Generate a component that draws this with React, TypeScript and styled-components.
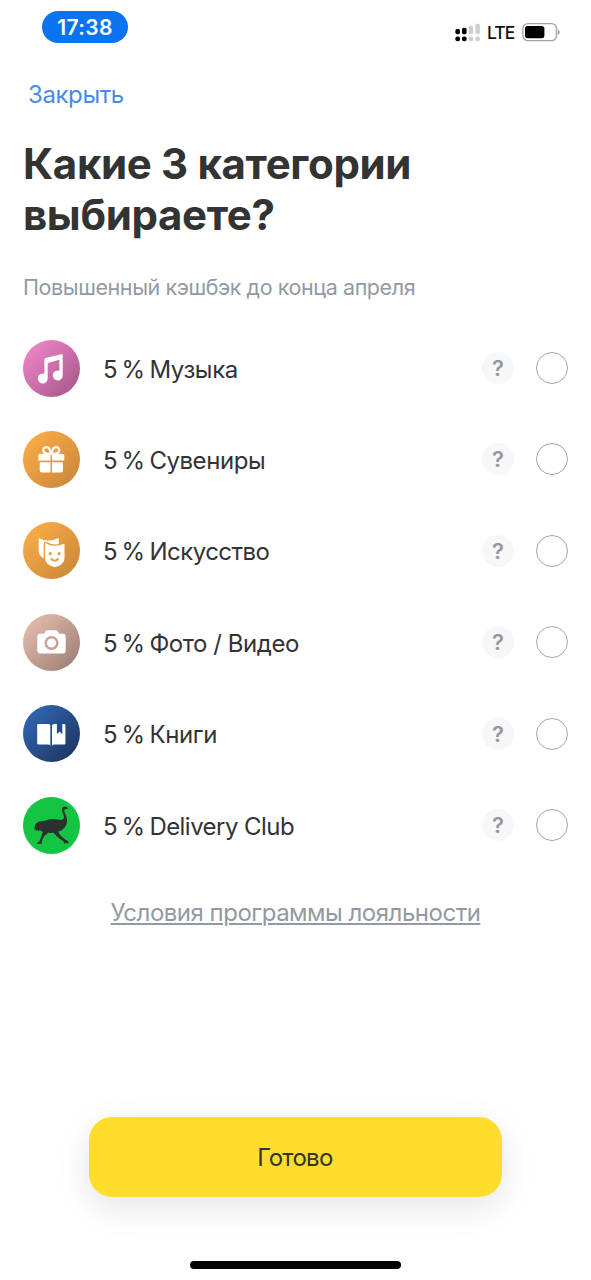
import React from 'react';
import styled, { createGlobalStyle } from 'styled-components';

const GlobalStyle = createGlobalStyle`
  * { box-sizing: border-box; }
  body {
    margin: 0;
    background: #fff;
    color: #333;
    font-family: Inter, 'Liberation Sans', sans-serif;
    -webkit-font-smoothing: antialiased;
  }
`;

const Screen = styled.main`
  display: flex;
  flex-direction: column;
  height: 1280px;
  overflow: hidden;
  background: #fff;
`;

const StatusBar = styled.header`
  display: flex;
  justify-content: space-between;
  padding: 11px 30px 0 42px;
  height: 67px;
`;

const TimePill = styled.div`
  width: 86px;
  height: 32px;
  border-radius: 16px;
  background: #0a74f0;
  color: #fff;
  font-size: 21px;
  font-weight: 600;
  line-height: 33px;
  letter-spacing: 0.3px;
  text-align: center;
`;

const StatusIcons = styled.div`
  display: flex;
  align-items: center;
  height: 42px;
`;

const Network = styled.span`
  margin: 1px 7px 0 6px;
  width: 28px;
  color: #111;
  font-size: 17.5px;
  font-weight: 500;
  letter-spacing: -0.9px;
`;

const CloseButton = styled.button`
  align-self: flex-start;
  margin: 0 0 0 28px;
  padding: 0;
  border: 0;
  background: none;
  color: #4a8ae8;
  font: 400 24px/56px Inter, sans-serif;
  letter-spacing: -0.4px;
`;

const Title = styled.h1`
  margin: 15px 0 0 23px;
  color: #333;
  font-size: 42px;
  font-weight: 700;
  line-height: 51px;
  letter-spacing: -0.35px;
`;

const Subtitle = styled.p`
  margin: 32px 0 0 23px;
  color: #9299a2;
  font-size: 21.5px;
  line-height: 30px;
  letter-spacing: -0.42px;
`;

const List = styled.ul`
  display: flex;
  flex-direction: column;
  gap: 34.4px;
  margin: 37.6px 0 0;
  padding: 0 23px;
  list-style: none;
`;

const Row = styled.li`
  display: flex;
  align-items: center;
  height: 57px;
`;

const Label = styled.span<{ $spacing: number }>`
  flex: 1;
  margin: 3px 0 0;
  font-size: 24px;
  line-height: 32px;
  letter-spacing: ${(p) => p.$spacing}px;
  white-space: nowrap;
`;

const Percent = styled.span`
  width: 46.4px;
  margin: 3px 0 0 23px;
  font-size: 24px;
  line-height: 32px;
  letter-spacing: -0.4px;
  word-spacing: -2px;
  white-space: nowrap;
`;

const Help = styled.button`
  width: 32px;
  height: 32px;
  padding: 0;
  border: 0;
  border-radius: 50%;
  background: #f7f7f8;
  color: #9299a2;
  font: 600 22px/32px Inter, sans-serif;
`;

const Radio = styled.span`
  width: 32px;
  height: 32px;
  margin-left: 22px;
  border: 1.2px solid #a3a6ac;
  border-radius: 50%;
`;

const Terms = styled.a`
  align-self: center;
  margin-top: 43.4px;
  color: #9299a2;
  font-size: 24px;
  line-height: 32px;
  letter-spacing: -0.49px;
  text-decoration: underline;
  text-decoration-thickness: 1.5px;
  text-underline-offset: 2px;
  white-space: nowrap;
`;

const Footer = styled.footer`
  display: flex;
  flex-direction: column;
  align-items: center;
  margin-top: auto;
  padding-bottom: 11px;
`;

const DoneButton = styled.button`
  width: 413px;
  height: 80px;
  padding: 1px 1px 0 0;
  border: 0;
  border-radius: 23px;
  background: #ffdd2d;
  box-shadow: 0 10px 34px rgba(0, 0, 0, 0.11);
  color: #333;
  font: 400 24px/80px Inter, sans-serif;
  letter-spacing: -0.7px;
`;

const HomeIndicator = styled.div`
  width: 211px;
  height: 8px;
  margin-top: 64px;
  border-radius: 4px;
  background: #000;
`;

const Signal = () => (
  <svg width="26" height="20" viewBox="0 0 26 20">
    <g fill="#000">
      <rect x="0.4" y="7" width="4.6" height="5.2" rx="1.6" />
      <rect x="7" y="5.8" width="4.6" height="6.4" rx="1.6" />
      <rect x="0.4" y="14.4" width="4.6" height="4.8" rx="1.8" />
      <rect x="7" y="14.4" width="4.6" height="4.8" rx="1.8" />
    </g>
    <g fill="#cfcfcf">
      <rect x="13.7" y="3.7" width="4.6" height="8.5" rx="1.6" />
      <rect x="20.3" y="1.7" width="4.6" height="10.5" rx="1.6" />
      <rect x="13.7" y="14.4" width="4.6" height="4.8" rx="1.8" />
      <rect x="20.3" y="14.4" width="4.6" height="4.8" rx="1.8" />
    </g>
  </svg>
);

const Battery = () => (
  <svg width="39" height="20" viewBox="0 0 39 20">
    <rect x="0.9" y="1.6" width="33.6" height="17" rx="5" fill="none" stroke="#a3a3a3" strokeWidth="1.4" />
    <rect x="3" y="4" width="19.4" height="12.2" rx="2.6" fill="#000" />
    <path d="M36 7.8c2 .7 2 4.200 0 5z" fill="#8a8a8a" />
  </svg>
);

type IconKind = 'music' | 'gift' | 'masks' | 'camera' | 'book' | 'ostrich';

const fills: Record<IconKind, [string, string]> = {
  music: ['#ed84c6', '#a9598d'],
  gift: ['#f8ab46', '#cd8939'],
  masks: ['#f8ab46', '#cd8939'],
  camera: ['#e2baab', '#a08178'],
  book: ['#2f65b0', '#1e3763'],
  ostrich: ['#15c442', '#15c442'],
};

const frontMask =
  'M22 21.900q0-1.100 1-.7 4.500 2.500 9 2.500t8.500-1.800q1-.4 1 .7v13.900q0 6-9.700 8.700-9.800-2.700-9.800-8.700z';

const glyphs: Record<IconKind, React.ReactNode> = {
  music: (
    <path
      fill="#fff"
      d="M21.4 19.600q0-1.200 1.200-1.500l15.500-3.900q1.600-.4 1.600 1.200v20a5 5 0 1 1-3.300-4.700V19.800L24.700 23v15.600a5 5 0 1 1-3.300-4.800z"
    />
  ),
  gift: (
    <g>
      <g fill="none" stroke="#fff" strokeWidth="2.200">
        <path d="M27.600 22.800c-.2-4-1.700-6.600-4.300-6.600-2.200 0-3.400 1.900-2.900 3.800.6 2.100 3.600 3 7.200 2.900z" />
        <path d="M28.900 22.800c.2-4 1.700-6.600 4.300-6.600 2.200 0 3.400 1.900 2.900 3.800-.6 2.100-3.600 3-7.200 2.900z" />
      </g>
      <path
        fill="#fff"
        d="M17.200 22.700H27.500V29.500H15.300V24.600q0-1.900 1.900-1.900zM29 22.700H39.400q1.900 0 1.900 1.900V29.500H29zM16.700 31.200H27.500V41.500H18.700q-2 0-2-2zM29 31.200H40V39.500q0 2-2 2H29z"
      />
    </g>
  ),
  masks: (
    <g>
      <mask id="mask-gap" maskUnits="userSpaceOnUse" x="0" y="0" width="57" height="57">
        <rect width="57" height="57" fill="#fff" />
        <path d={frontMask} fill="#000" stroke="#000" strokeWidth="2.600" />
      </mask>
      <path
        mask="url(#mask-gap)"
        fill="#fff"
        d="M15.700 17q0-1 1-.6 4.400 2.300 9.300 2.200 4.500-.1 8.600-2.300 1.200-.4 1.200.6v12q0 6-9.900 8.700-10.200-2-10.200-8z"
      />
      <path fill="#fff" d={frontMask} />
      <g fill="#e99f40">
        <circle cx="27.300" cy="31.600" r="1.700" />
        <circle cx="36.100" cy="31.600" r="1.700" />
      </g>
      <path d="M28.400 37q3.300 3.600 6.600 0" fill="none" stroke="#e99f40" strokeWidth="2" strokeLinecap="round" />
    </g>
  ),
  camera: (
    <g>
      <path
        fill="#fff"
        d="M17 19.800h3.300q1 0 1.400-1l.6-1.400q.5-1.200 1.700-1.200h9q1.200 0 1.700 1.200l.6 1.400q.4 1 1.400 1H40q2.700 0 2.700 2.700v14.300q0 2.700-2.700 2.700H17q-2.700 0-2.700-2.700V22.500q0-2.700 2.700-2.700z"
      />
      <circle cx="28.500" cy="29" r="5.800" fill="none" stroke="#c7a195" strokeWidth="2.400" />
    </g>
  ),
  book: (
    <path
      fill="#fff"
      d="M15.200 19H25q1.600 0 2.300 1v20.700q-.7-1.200-2.300-1.200H15.200q-1 0-1-1V20q0-1 1-1zM29 20.300q.8-1.300 2.800-1.300h2.100v8.700q0 1.500 1 .5l1.700-1.700 1.700 1.700q1 1 1-.5V19h2.100q1 0 1 1v18.500q0 1-1 1h-10.100q-1.500 0-2.300 1.200z"
    />
  ),
  ostrich: (
    <path
      fill="#2a302d"
      d="M11.500 31C11.800 26.500 15 24.200 19.500 24C23.500 23.800 25 21.900 30 21.900C34 21.900 36.500 23.200 38.600 22.800C41 22.300 41.200 20.400 40.700 18.500C40 16.500 38.900 15 39 12.800C39.100 10.500 40.300 9.600 42 9.600C43.500 9.600 43.900 10.300 45.400 11.600L42.300 12.200C41.200 12.600 41.100 13.400 41.400 14.500C41.900 16.600 43.300 18.400 43.800 21C44.700 26 42.600 30.600 39 33C37.800 33.800 36.300 34.400 35.200 34.600L37 37.900L42.400 42.800L44.600 43.700C45.200 44.300 45.400 45.600 45.300 46.900L43.500 45.700L41.300 46.500L40.600 44.600L34.800 40.300L30.200 35.400C28.200 35.900 26.600 36 25 35.800C24 37.400 22 38 20.900 39.400L18.800 44.700L18.900 47.500L17.200 46.600L13.600 47.200C13.900 45.900 15 45.100 16.200 44.800L18.500 38.700L20 34.800C18.500 34.500 17.500 33.900 16.700 33.100L15.600 34.300L14.700 33L12.800 34L12.900 32.200L11 32.200Z"
    />
  ),
};

const CategoryIcon = ({ kind }: { kind: IconKind }) => (
  <svg width="57" height="57" viewBox="0 0 57 57">
    <defs>
      <linearGradient id={`fill-${kind}`} x1="0.12" y1="0.12" x2="0.9" y2="0.9">
        <stop offset="0" stopColor={fills[kind][0]} />
        <stop offset="1" stopColor={fills[kind][1]} />
      </linearGradient>
    </defs>
    <circle cx="28.500" cy="28.500" r="28.500" fill={`url(#fill-${kind})`} />
    {glyphs[kind]}
  </svg>
);

const categories: { kind: IconKind; label: string; spacing: number }[] = [
  { kind: 'music', label: 'Музыка', spacing: -0.4 },
  { kind: 'gift', label: 'Сувениры', spacing: -0.45 },
  { kind: 'masks', label: 'Искусство', spacing: -0.52 },
  { kind: 'camera', label: 'Фото / Видео', spacing: -0.45 },
  { kind: 'book', label: 'Книги', spacing: -0.38 },
  { kind: 'ostrich', label: 'Delivery Club', spacing: -0.55 },
];

export default function App() {
  return (
    <Screen>
      <GlobalStyle />
      <StatusBar>
        <TimePill>17:38</TimePill>
        <StatusIcons>
          <Signal />
          <Network>LTE</Network>
          <Battery />
        </StatusIcons>
      </StatusBar>
      <CloseButton>Закрыть</CloseButton>
      <Title>
        Какие 3 категории
        <br />
        выбираете?
      </Title>
      <Subtitle>Повышенный кэшбэк до конца апреля</Subtitle>
      <List>
        {categories.map((c) => (
          <Row key={c.kind}>
            <CategoryIcon kind={c.kind} />
            <Percent>5 %</Percent>
            <Label $spacing={c.spacing}>{c.label}</Label>
            <Help>?</Help>
            <Radio />
          </Row>
        ))}
      </List>
      <Terms>Условия программы лояльности</Terms>
      <Footer>
        <DoneButton>Готово</DoneButton>
        <HomeIndicator />
      </Footer>
    </Screen>
  );
}
